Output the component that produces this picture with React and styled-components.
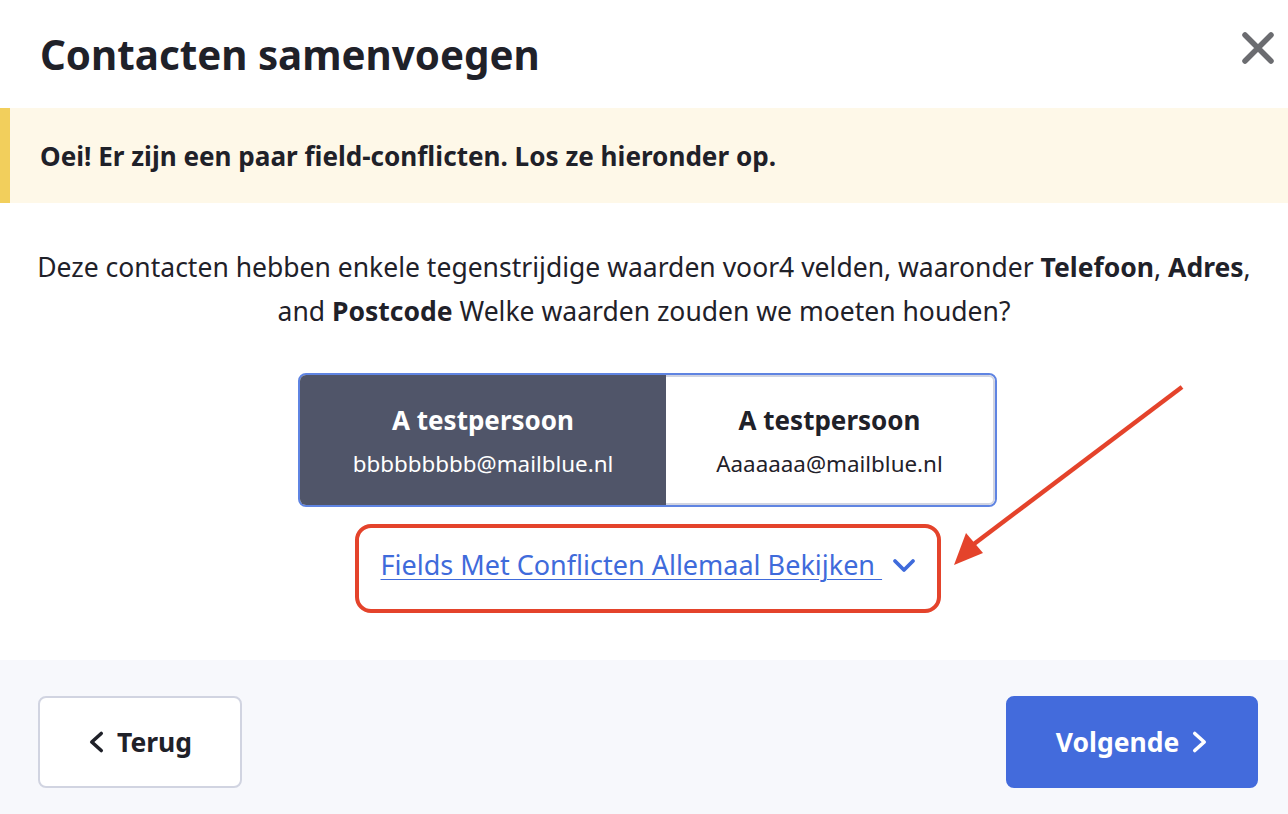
import styled, { createGlobalStyle } from "styled-components";

const GlobalStyle = createGlobalStyle`
  html, body {
    margin: 0;
    padding: 0;
    background: #ffffff;
  }
  body {
    font-family: "Noto Sans", Roboto, "Liberation Sans", sans-serif;
    color: #1f2129;
  }
  * {
    box-sizing: border-box;
  }
`;

const Modal = styled.div`
  position: relative;
  width: 1288px;
  height: 814px;
  display: flex;
  flex-direction: column;
  background: #ffffff;
  overflow: hidden;
`;

const Header = styled.header`
  height: 108px;
  padding: 0 10px 0 40px;
  display: flex;
  align-items: center;
  justify-content: space-between;
`;

const Title = styled.h1`
  margin: 0;
  font-size: 40.3px;
  font-weight: 700;
  color: #1f2129;
`;

const CloseButton = styled.button`
  width: 40px;
  height: 40px;
  margin-bottom: 12px;
  padding: 0;
  border: none;
  background: none;
  display: flex;
  align-items: center;
  justify-content: center;
  cursor: pointer;
`;

const Banner = styled.div`
  height: 95px;
  display: flex;
  align-items: center;
  padding-left: 30px;
  border-left: 10px solid #f2cf5c;
  background: #fef8e8;
  font-size: 26.1px;
  font-weight: 700;
  color: #1f2129;
`;

const Body = styled.main`
  flex: 1;
  display: flex;
  flex-direction: column;
  align-items: center;
  padding-top: 42px;
`;

const Intro = styled.p`
  margin: 0;
  max-width: 1250px;
  text-align: center;
  font-size: 26.5px;
  line-height: 44px;
  color: #1f2129;

  strong {
    font-weight: 700;
  }
`;

const Picker = styled.div`
  margin: 40px 0 0 7px;
  width: 699px;
  height: 134px;
  display: flex;
  border: 2px solid #5f84e2;
  border-radius: 8px;
  overflow: hidden;
`;

const Option = styled.button`
  flex: ${({ $selected }) => ($selected ? "0 0 366px" : "1")};
  display: flex;
  flex-direction: column;
  align-items: center;
  justify-content: center;
  gap: 10px;
  padding: 0;
  font-family: inherit;
  background: ${({ $selected }) => ($selected ? "#505569" : "#ffffff")};
  color: ${({ $selected }) => ($selected ? "#ffffff" : "#1f2129")};
  border: ${({ $selected }) => ($selected ? "none" : "2px solid #d1d4e1")};
  border-left: none;
  border-radius: ${({ $selected }) => ($selected ? "0" : "0 6px 6px 0")};
  cursor: pointer;
`;

const OptionName = styled.span`
  font-size: 26px;
  font-weight: 700;
`;

const OptionEmail = styled.span`
  font-size: 22.4px;
`;

const Highlight = styled.div`
  margin: 17px 0 0 7px;
  width: 586px;
  height: 89px;
  display: flex;
  align-items: center;
  padding: 0 0 8px 22px;
  border: 4px solid #e4432b;
  border-radius: 16px;
`;

const ConflictLink = styled.a`
  display: inline-flex;
  align-items: center;
  gap: 10px;
  font-size: 27px;
  color: #3f6bdb;
  cursor: pointer;

  span {
    text-decoration: underline;
    text-decoration-thickness: 1px;
    text-underline-offset: 4px;
    white-space: pre;
  }
`;

const Arrow = styled.svg`
  position: absolute;
  left: 940px;
  top: 375px;
  pointer-events: none;
`;

const Footer = styled.footer`
  height: 154px;
  background: #f7f8fc;
  display: flex;
  align-items: flex-start;
  justify-content: space-between;
  padding: 36px 30px 0 38px;
`;

const Button = styled.button`
  height: 92px;
  width: ${({ $primary }) => ($primary ? "252px" : "204px")};
  display: flex;
  align-items: center;
  justify-content: center;
  gap: 12px;
  font-family: inherit;
  font-size: 26.5px;
  font-weight: 700;
  border-radius: 8px;
  border: 2px solid ${({ $primary }) => ($primary ? "#436bdc" : "#d1d4e1")};
  background: ${({ $primary }) => ($primary ? "#436bdc" : "#ffffff")};
  color: ${({ $primary }) => ($primary ? "#ffffff" : "#1f2129")};
  cursor: pointer;
`;

const chevronPaths = {
  left: "M14 3 L4 12 L14 21",
  right: "M4 3 L14 12 L4 21",
  down: "M3 5 L12 14 L21 5",
};

const Chevron = ({ dir, color, width, height }) => (
  <svg
    width={width}
    height={height}
    viewBox={dir === "down" ? "0 0 24 18" : "0 0 18 24"}
    fill="none"
  >
    <path
      d={chevronPaths[dir]}
      stroke={color}
      strokeWidth="3.8"
      strokeLinecap="round"
      strokeLinejoin="round"
    />
  </svg>
);

export default function App() {
  return (
    <>
      <GlobalStyle />
      <Modal>
        <Header>
          <Title>Contacten samenvoegen</Title>
          <CloseButton aria-label="Sluiten">
            <svg width="36" height="36" viewBox="0 0 36 36">
              <path
                d="M5 5 L31 31 M31 5 L5 31"
                stroke="#6b6c70"
                strokeWidth="5.5"
                strokeLinecap="round"
              />
            </svg>
          </CloseButton>
        </Header>

        <Banner>Oei! Er zijn een paar field-conflicten. Los ze hieronder op.</Banner>

        <Body>
          <Intro>
            Deze contacten hebben enkele tegenstrijdige waarden voor4 velden, waaronder{" "}
            <strong>Telefoon</strong>, <strong>Adres</strong>,<br />
            and <strong>Postcode</strong> Welke waarden zouden we moeten houden?
          </Intro>

          <Picker>
            <Option $selected>
              <OptionName>A testpersoon</OptionName>
              <OptionEmail>bbbbbbbbb@mailblue.nl</OptionEmail>
            </Option>
            <Option>
              <OptionName>A testpersoon</OptionName>
              <OptionEmail>Aaaaaaa@mailblue.nl</OptionEmail>
            </Option>
          </Picker>

          <Highlight>
            <ConflictLink>
              <span>Fields Met Conflicten Allemaal Bekijken </span>
              <Chevron dir="down" color="#3f6bdb" width={24} height={18} />
            </ConflictLink>
          </Highlight>
        </Body>

        <Footer>
          <Button>
            <Chevron dir="left" color="#1f2129" width={17} height={24} />
            Terug
          </Button>
          <Button $primary>
            Volgende
            <Chevron dir="right" color="#ffffff" width={17} height={24} />
          </Button>
        </Footer>

        <Arrow width="260" height="200" viewBox="0 0 260 200">
          <line x1="242" y1="12" x2="30" y2="172" stroke="#e4432b" strokeWidth="4.5" />
          <polygon points="14,190 26,158 43,178" fill="#e4432b" />
        </Arrow>
      </Modal>
    </>
  );
}
